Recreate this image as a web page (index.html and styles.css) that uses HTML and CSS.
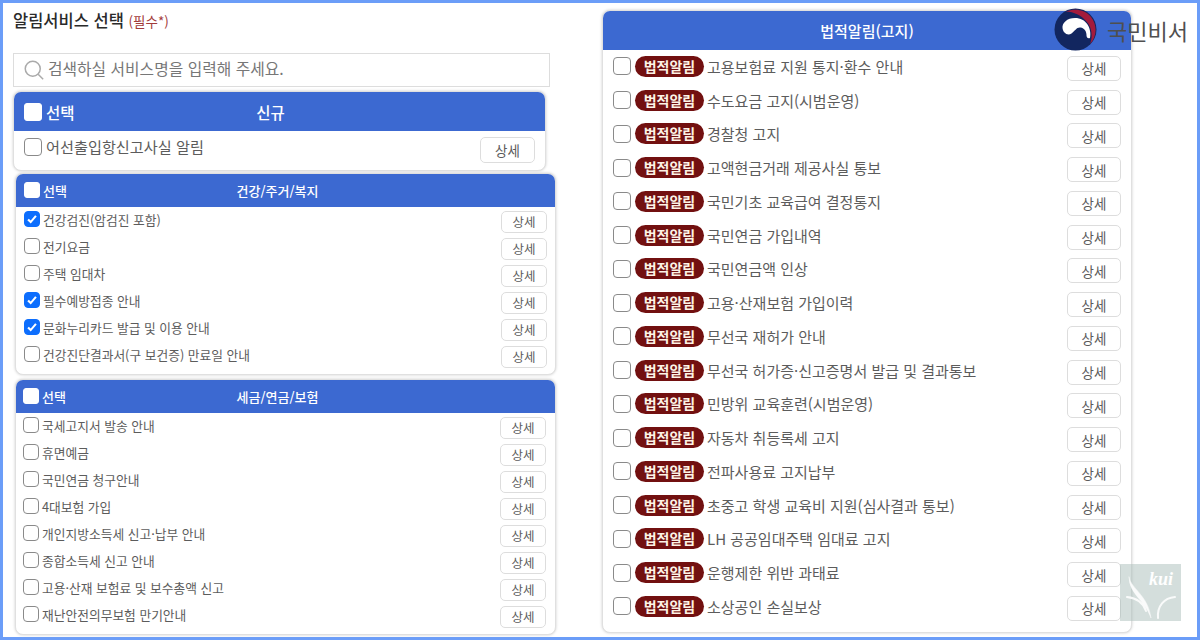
FILE: index.html
```html
<!DOCTYPE html>
<html lang="ko">
<head>
<meta charset="utf-8">
<title>알림서비스 선택</title>
<link rel="stylesheet" href="styles.css">
</head>
<body>
<div class="frame">
  <section class="left">
    <h1 class="title">알림서비스 선택 <small class="req">(필수*)</small></h1>
    <div class="search">
      <svg class="search-ico" width="20" height="20" viewBox="0 0 24 24" fill="none" stroke="#aaa" stroke-width="1.8"><circle cx="10.500" cy="10.500" r="9"/><path d="M17 17l6 6"/></svg>
      <span class="search-text">검색하실 서비스명을 입력해 주세요.</span>
    </div>

    <div class="card card-new">
      <div class="head"><span class="cb cb-white"></span><b class="sel">선택</b><span class="cat">신규</span></div>
      <div class="row"><span class="cb"></span><span class="label">어선출입항신고사실 알림</span><button class="btn">상세</button></div>
    </div>

    <div class="card card-sm card-health">
      <div class="head"><span class="cb cb-white"></span><b class="sel">선택</b><span class="cat">건강/주거/복지</span></div>
      <div class="row"><span class="cb on"><svg viewBox="0 0 16 16" width="16" height="16"><path d="M3.500 8.500l3 3 6-7" fill="none" stroke="#fff" stroke-width="2.400"/></svg></span><span class="label">건강검진(암검진 포함)</span><button class="btn">상세</button></div>
      <div class="row"><span class="cb"></span><span class="label">전기요금</span><button class="btn">상세</button></div>
      <div class="row"><span class="cb"></span><span class="label">주택 임대차</span><button class="btn">상세</button></div>
      <div class="row"><span class="cb on"><svg viewBox="0 0 16 16" width="16" height="16"><path d="M3.500 8.500l3 3 6-7" fill="none" stroke="#fff" stroke-width="2.400"/></svg></span><span class="label">필수예방접종 안내</span><button class="btn">상세</button></div>
      <div class="row"><span class="cb on"><svg viewBox="0 0 16 16" width="16" height="16"><path d="M3.500 8.500l3 3 6-7" fill="none" stroke="#fff" stroke-width="2.400"/></svg></span><span class="label">문화누리카드 발급 및 이용 안내</span><button class="btn">상세</button></div>
      <div class="row"><span class="cb"></span><span class="label">건강진단결과서(구 보건증) 만료일 안내</span><button class="btn">상세</button></div>
    </div>

    <div class="card card-sm card-tax">
      <div class="head"><span class="cb cb-white"></span><b class="sel">선택</b><span class="cat">세금/연금/보험</span></div>
      <div class="row"><span class="cb"></span><span class="label">국세고지서 발송 안내</span><button class="btn">상세</button></div>
      <div class="row"><span class="cb"></span><span class="label">휴면예금</span><button class="btn">상세</button></div>
      <div class="row"><span class="cb"></span><span class="label">국민연금 청구안내</span><button class="btn">상세</button></div>
      <div class="row"><span class="cb"></span><span class="label">4대보험 가입</span><button class="btn">상세</button></div>
      <div class="row"><span class="cb"></span><span class="label">개인지방소득세 신고·납부 안내</span><button class="btn">상세</button></div>
      <div class="row"><span class="cb"></span><span class="label">종합소득세 신고 안내</span><button class="btn">상세</button></div>
      <div class="row"><span class="cb"></span><span class="label">고용·산재 보험료 및 보수총액 신고</span><button class="btn">상세</button></div>
      <div class="row"><span class="cb"></span><span class="label">재난안전의무보험 만기안내</span><button class="btn">상세</button></div>
    </div>
  </section>

  <section class="card right">
    <div class="head"><span class="cat">법적알림(고지)</span></div>
    <div class="row"><span class="cb"></span><span class="tag">법적알림</span><span class="label">고용보험료 지원 통지·환수 안내</span><button class="btn">상세</button></div>
    <div class="row"><span class="cb"></span><span class="tag">법적알림</span><span class="label">수도요금 고지(시범운영)</span><button class="btn">상세</button></div>
    <div class="row"><span class="cb"></span><span class="tag">법적알림</span><span class="label">경찰청 고지</span><button class="btn">상세</button></div>
    <div class="row"><span class="cb"></span><span class="tag">법적알림</span><span class="label">고액현금거래 제공사실 통보</span><button class="btn">상세</button></div>
    <div class="row"><span class="cb"></span><span class="tag">법적알림</span><span class="label">국민기초 교육급여 결정통지</span><button class="btn">상세</button></div>
    <div class="row"><span class="cb"></span><span class="tag">법적알림</span><span class="label">국민연금 가입내역</span><button class="btn">상세</button></div>
    <div class="row"><span class="cb"></span><span class="tag">법적알림</span><span class="label">국민연금액 인상</span><button class="btn">상세</button></div>
    <div class="row"><span class="cb"></span><span class="tag">법적알림</span><span class="label">고용·산재보험 가입이력</span><button class="btn">상세</button></div>
    <div class="row"><span class="cb"></span><span class="tag">법적알림</span><span class="label">무선국 재허가 안내</span><button class="btn">상세</button></div>
    <div class="row"><span class="cb"></span><span class="tag">법적알림</span><span class="label">무선국 허가증·신고증명서 발급 및 결과통보</span><button class="btn">상세</button></div>
    <div class="row"><span class="cb"></span><span class="tag">법적알림</span><span class="label">민방위 교육훈련(시범운영)</span><button class="btn">상세</button></div>
    <div class="row"><span class="cb"></span><span class="tag">법적알림</span><span class="label">자동차 취등록세 고지</span><button class="btn">상세</button></div>
    <div class="row"><span class="cb"></span><span class="tag">법적알림</span><span class="label">전파사용료 고지납부</span><button class="btn">상세</button></div>
    <div class="row"><span class="cb"></span><span class="tag">법적알림</span><span class="label">초중고 학생 교육비 지원(심사결과 통보)</span><button class="btn">상세</button></div>
    <div class="row"><span class="cb"></span><span class="tag">법적알림</span><span class="label">LH 공공임대주택 임대료 고지</span><button class="btn">상세</button></div>
    <div class="row"><span class="cb"></span><span class="tag">법적알림</span><span class="label">운행제한 위반 과태료</span><button class="btn">상세</button></div>
    <div class="row"><span class="cb"></span><span class="tag">법적알림</span><span class="label">소상공인 손실보상</span><button class="btn">상세</button></div>
  </section>

  <div class="logo">
    <svg width="43" height="43" viewBox="0 0 43 43">
      <circle cx="21.500" cy="21.500" r="21" fill="#12265f"/>
      <path d="M36 30C38 20 32 10 21 10 13 10 8 15 8.500 20c.5 5 5 8 9 5.500 3.500-2.500 5-6.500 9-6 4 .5 6 4 6 8 0 2 1.500 3.500 3.500 2.500z" fill="#fff"/>
      <path d="M12 3.500C20 .5 31 1 37 9c6.500 8 6 20-1 27 3-8 2-17-4-23C27 7 20 4 12 3.500z" fill="#a31b3c"/>
    </svg>
    <span>국민비서</span>
  </div>

  <div class="mark">
    <svg width="61" height="57" viewBox="0 0 61 57" fill="none" stroke="#fff" stroke-linecap="round">
      <path d="M9 13c2 12 19 18 22 41-6-18-22-24-22-41z" fill="#fff" stroke-width=".5" opacity=".9"/>
      <path d="M7 33c9 1 16 5 19 14" stroke-width="2" opacity=".85"/>
      <path d="M55 33c-11 1-18 9-17 21" stroke-width="2" opacity=".85"/>
    </svg>
    <span>kui</span>
  </div>
</div>
</body>
</html>
```

FILE: styles.css
```css
* { box-sizing: border-box; }
html, body { margin: 0; padding: 0; }
body {
  width: 1200px;
  height: 640px;
  overflow: hidden;
  background: #fff;
  font-family: "Noto Sans CJK KR", "Noto Sans", sans-serif;
  color: #5c5c5c;
}
.frame {
  position: relative;
  width: 1200px;
  height: 640px;
  border: 3px solid #6b9df8;
  display: flex;
  align-items: flex-start;
  background: #fff;
}
.left {
  width: 553px;
  margin-left: 10px;
  flex: none;
}
.title {
  margin: 6px 0 0;
  height: 44px;
  font-size: 16.500px;
  line-height: 22px;
  font-weight: 500;
  color: #2a2a2a;
}
.req { font-size: 13.500px; font-weight: 400; color: #a23a3a; }
.search {
  width: 537px;
  height: 34px;
  border: 1px solid #ddd;
  display: flex;
  align-items: center;
  padding-left: 10px;
  font-size: 15.800px;
  color: #777;
  gap: 4px;
}
.search-ico { flex: none; }
.search-text { margin-top: -3px; }
.card {
  background: #fff;
  border: 1px solid #e0e0e0;
  border-radius: 8px;
  box-shadow: 0 0 3px #ccc;
  overflow: hidden;
}
.head {
  background: #3c69d1;
  color: #fff;
  display: flex;
  align-items: center;
  position: relative;
  font-weight: 500;
}
.sel { font-weight: 500; }
.cat { position: absolute; left: 0; right: 0; text-align: center; }
.row { display: flex; align-items: center; }
.label { flex: 1; white-space: nowrap; }
.cb {
  flex: none;
  width: 18px;
  height: 18px;
  border: 1px solid #8a8a8a;
  border-radius: 4px;
  background: #fff;
  display: flex;
  align-items: center;
  justify-content: center;
}
.cb-white { border-color: #fff; border-radius: 3px; }
.cb.on { background: #0d6efd; border-color: #0d6efd; }
.btn {
  flex: none;
  font: inherit;
  color: #5c5c5c;
  background: #fff;
  border: 1px solid #ddd;
  border-radius: 5px;
  padding: 0;
}
.card-new { margin: 4px 0 0; width: 533px; height: 80px; }
.card-new .head { height: 39px; padding-left: 10px; gap: 4px; font-size: 15.500px; }
.card-new .cat { left: -18px; right: 0; }
.card-new .row { height: 39px; padding: 0 10px; gap: 4px; font-size: 15.200px; }
.card-new .label { margin-top: -10px; }
.card-new .row .cb { margin-top: -8px; }
.card-new .btn { width: 55px; height: 26px; font-size: 13.500px; margin-top: -2px; }
.card-sm { margin-left: 2px; width: 541px; }
.card-health { margin-top: 2px; height: 202px; }
.card-tax { margin-top: 4px; height: 256px; }
.card-sm .head { height: 33px; padding-left: 8px; gap: 3px; font-size: 13px; }
.card-sm .head > * { margin-top: -1px; }
.card-sm .head .cb { width: 16px; height: 16px; }
.card-sm .cat { left: -16px; right: 0; }
.card-sm .row { height: 27px; padding: 0 8px; gap: 3px; font-size: 12.750px; }
.card-sm .row .cb { width: 16px; height: 16px; margin-top: -3px; }
.card-sm .label { margin-top: -3px; }
.card-sm .btn { width: 46px; height: 22px; font-size: 12.500px; margin-top: 2px; }
.card-tax .head { padding-left: 7px; }
.card-tax .row { padding: 0 9px 0 7px; }
.right { width: 530px; height: 623px; margin: 7px 0 0 36px; flex: none; }
.right .head { height: 39px; margin-bottom: 1px; font-size: 15px; }
.right .row { height: 33.750px; padding: 0 10px; gap: 3px; font-size: 15px; }
.right .row .cb { margin-top: -3px; margin-right: 1px; }
.right .label { margin-top: -3px; }
.right .btn { width: 54px; height: 25px; font-size: 13.500px; margin-top: 1px; }
.tag {
  flex: none;
  width: 69px;
  height: 21px;
  border-radius: 11px;
  background: #721010;
  color: #fdf3e6;
  font-size: 14px;
  font-weight: 700;
  text-align: center;
  line-height: 21px;
  margin-top: -3px;
}
.logo {
  position: absolute;
  left: 1051px;
  top: 5px;
  display: flex;
  align-items: center;
  gap: 10px;
  font-size: 22px;
  color: #4f4f4f;
}
.logo svg { display: block; }
.mark {
  position: absolute;
  left: 1117px;
  top: 561px;
  width: 61px;
  height: 57px;
  background: rgba(170, 190, 185, .5);
}
.mark svg { display: block; }
.mark span {
  position: absolute;
  left: 29px;
  top: 5px;
  font: italic 700 18px "Liberation Serif", serif;
  color: #fff;
}
```
